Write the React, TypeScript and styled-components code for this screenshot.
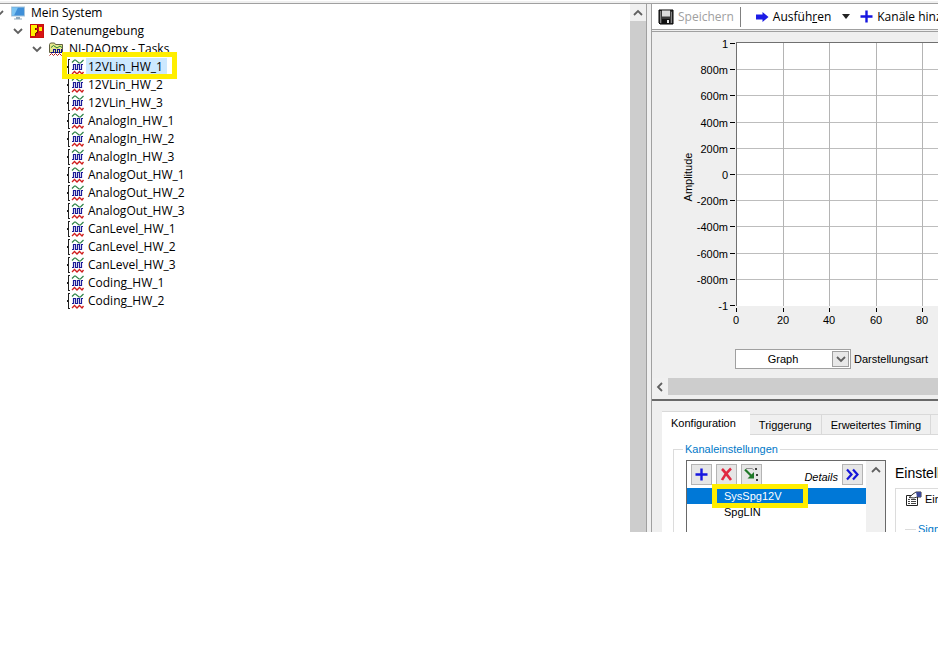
import React, { useState } from 'react';
import styled, { createGlobalStyle, css } from 'styled-components';

const GlobalStyle = createGlobalStyle`
  * { box-sizing: border-box; }
  body { margin: 0; background: #fff; color: #000; font: 11px/16px "Liberation Sans", Arial, sans-serif; }
  button, select { font: inherit; color: inherit; }
  svg { flex: none; }
`;

const treeFont = css`font: 12px/18px "Open Sans", "Noto Sans", sans-serif;`;

/* ---------- shell ---------- */
const Window = styled.div`
  overflow: hidden;
  background: #f0f0f0;
`;
const TopEdge = styled.div`
  height: 4px;
  background: #f0f0f0;
  border-top: 1px solid #fff;
  border-bottom: 1px solid #a0a0a0;
`;
const Split = styled.main`
  display: grid;
  grid-template-columns: minmax(0, 647fr) minmax(0, 291fr);
`;
const TreePane = styled.nav`
  display: flex;
  background: #fff;
  border-right: 1px solid #a0a0a0;
`;
const WorkPane = styled.section`
  margin-left: 4px;
  min-width: 0;
  border-left: 1px solid #a0a0a0;
  background: #efefef;
  overflow: hidden;
`;

/* ---------- tree ---------- */
const Tree = styled.ul`
  flex: 1;
  min-width: 0;
  margin: 0;
  padding: 0;
  list-style: none;
  overflow: hidden;
`;
const TreeRow = styled.li<{ $level: number }>`
  position: relative;
  display: flex;
  align-items: center;
  height: 18px;
  margin-left: -7px;
  padding-left: ${p => p.$level * 19}px;
`;
const Twisty = styled.button`
  display: flex;
  justify-content: center;
  width: 11px;
  margin-right: 6px;
  padding: 0;
  border: 0;
  background: none;
`;
const TwistySpace = styled.span`
  width: 17px;
`;
const TreeIcon = styled.span`
  display: flex;
  width: 19px;
`;
const TreeLabel = styled.button<{ $selected: boolean }>`
  ${treeFont}
  height: 18px;
  padding: 0 4px 0 2px;
  border: 0;
  white-space: nowrap;
  background: ${p => (p.$selected ? '#cce8ff' : 'none')};
`;
const Marker = styled.span<{ $wide?: boolean }>`
  position: absolute;
  z-index: 1;
  pointer-events: none;
  border: 5px solid #ffee00;
  ${p => (p.$wide
    ? 'left: 69px; top: -6px; width: 115px; height: 27px;'
    : 'left: 25px; top: -4px; width: 96px; height: 24px;')}
`;
const VScroll = styled.div<{ $thumb?: boolean }>`
  display: flex;
  flex-direction: column;
  align-items: center;
  width: ${p => (p.$thumb ? 16 : 19)}px;
  background: ${p => (p.$thumb ? '#cdcdcd' : '#f0f0f0')};
`;
const ScrollButton = styled.button`
  display: flex;
  align-items: center;
  justify-content: center;
  width: 16px;
  height: 17px;
  padding: 0;
  border: 0;
  background: #f0f0f0;
`;

/* ---------- toolbar ---------- */
const Toolbar = styled.div`
  display: flex;
  align-items: center;
  height: 26px;
  padding-left: 6px;
  background: #fff;
  border-bottom: 1px solid #a0a0a0;
`;
const ToolbarEdge = styled.div`
  height: 2px;
  border-bottom: 1px solid #a0a0a0;
`;
const ToolButton = styled.button`
  ${treeFont}
  display: flex;
  flex: none;
  align-items: center;
  gap: 4px;
  height: 22px;
  padding: 0;
  border: 0;
  background: none;
  white-space: nowrap;
  &:disabled { color: #a0a0a0; }
`;
const Divider = styled.span`
  flex: none;
  width: 1px;
  height: 20px;
  margin: 0 14px 0 6px;
  background: #808080;
`;
const MenuArrow = styled.button`
  display: flex;
  flex: none;
  margin: 0 10px 0 11px;
  padding: 0;
  border: 0;
  background: none;
`;

/* ---------- graph ---------- */
const Chart = styled.svg`
  display: block;
  width: 100%;
  height: 317px;
`;
const DisplayRow = styled.div`
  display: flex;
  align-items: center;
  gap: 3px;
  padding: 0 0 9px 83px;
`;
const SelectBox = styled.span`
  display: grid;
  flex: none;
  width: 116px;
  height: 20px;
  border: 1px solid #a0a0a0;
  background: #fff;
  > * { grid-area: 1 / 1; }
`;
const Select = styled.select`
  appearance: none;
  width: 100%;
  padding: 0 20px 0 0;
  border: 0;
  background: none;
  text-align: center;
  text-align-last: center;
`;
const SelectArrow = styled.span`
  display: flex;
  align-items: center;
  justify-content: center;
  justify-self: end;
  width: 17px;
  margin: 1px;
  border: 1px solid #a0a0a0;
  background: #e8e8e8;
  pointer-events: none;
`;
const FieldLabel = styled.label`
  white-space: nowrap;
`;
const HScroll = styled.div`
  display: flex;
  height: 17px;
  background: #cdcdcd;
`;
const Splitter = styled.div`
  height: 6px;
  border-bottom: 2px solid #696969;
`;

/* ---------- configuration ---------- */
const TabBar = styled.div`
  display: flex;
  align-items: flex-end;
  padding: 10px 0 0 10px;
`;
const Tab = styled.button<{ $active: boolean }>`
  flex: none;
  min-width: 60px;
  height: ${p => (p.$active ? 24 : 21)}px;
  padding: ${p => (p.$active ? '0 14px 2px 9px' : '0 9px')};
  border: 1px solid #d9d9d9;
  border-width: ${p => (p.$active ? '1px 0 0' : '1px 1px 1px 0')};
  background: ${p => (p.$active ? '#fff' : '#f0f0f0')};
  white-space: nowrap;
`;
const TabPage = styled.div`
  margin-left: 10px;
  padding: 6px 0 0 11px;
  background: #fff;
`;
const Group = styled.fieldset`
  min-width: 0;
  margin: 0;
  padding: 3px 0 0 12px;
  border: 1px solid #dcdcdc;
  border-width: 1px 0 0 1px;
`;
const Legend = styled.legend`
  margin-left: -3px;
  padding: 0 2px;
  color: #0078c8;
  white-space: nowrap;
`;
const GroupRow = styled.div`
  display: flex;
  height: 72px;
  overflow: hidden;
`;
const ChannelBox = styled.div`
  display: flex;
  flex: none;
  width: 200px;
  border: 1px solid #696969;
  border-bottom: 0;
`;
const ChannelMain = styled.div`
  flex: 1;
`;
const ChannelTools = styled.div`
  display: flex;
  align-items: center;
  gap: 4px;
  height: 27px;
  padding: 0 3px 0 4px;
`;
const SquareButton = styled.button`
  display: flex;
  align-items: center;
  justify-content: center;
  width: 21px;
  height: 21px;
  padding: 0;
  border: 1px solid #b4b4b4;
  background: #e6e6e6;
`;
const DetailsText = styled.span`
  margin-left: auto;
  padding-top: 4px;
  font-style: italic;
`;
const ChannelList = styled.ul`
  margin: 0;
  padding: 0;
  list-style: none;
`;
const Channel = styled.li`
  position: relative;
`;
const ChannelButton = styled.button<{ $selected: boolean }>`
  display: block;
  width: 100%;
  height: 16px;
  padding: 0 0 0 37px;
  border: 0;
  text-align: left;
  background: ${p => (p.$selected ? '#0078d7' : 'none')};
  color: ${p => (p.$selected ? '#fff' : '#000')};
`;
const Settings = styled.div`
  flex: 1;
  min-width: 0;
  padding: 4px 0 0 9px;
`;
const SettingsTitle = styled.h2`
  margin: 0 0 6px;
  font-size: 14px;
  line-height: 18px;
  font-weight: 400;
  white-space: nowrap;
`;
const SettingsCard = styled.div`
  padding: 2px 0 0 9px;
  border: 1px solid #dcdcdc;
  border-width: 1px 0 0 1px;
`;
const CardTitle = styled.div`
  display: flex;
  align-items: center;
  gap: 3px;
  height: 16px;
  white-space: nowrap;
`;
const SignalGroup = styled.fieldset`
  margin: 14px 0 0;
  padding: 0 0 8px 14px;
  border: 0 solid #dcdcdc;
  border-width: 1px 0 0;
  color: #0078c8;
`;

/* ---------- icons ---------- */
type Dir = 'up' | 'down' | 'left';
const Chevron = ({ dir }: { dir: Dir }) => {
  const d = { up: 'M1 7 5 3 9 7', down: 'M1 3 5 7 9 3', left: 'M7 1 3 5 7 9' }[dir];
  return (
    <svg width="10" height="10" viewBox="0 0 10 10" fill="none" stroke="#606060" strokeWidth="1.8">
      <path d={d} />
    </svg>
  );
};
const SystemIcon = () => (
  <svg width="16" height="16" viewBox="0 0 16 16">
    <rect x="1" y="1.5" width="14" height="10" fill="#a9c6dc" />
    <rect x="2" y="2.5" width="12" height="8" fill="#3f8fd8" />
    <path d="M2 2.5h6L4 10.5H2z" fill="#7cc4f2" />
    <path d="M6 12h4v1.500h2v1H4v-1h2z" fill="#8fa9bb" />
  </svg>
);
const DataIcon = () => (
  <svg width="16" height="16" viewBox="0 0 16 16" shapeRendering="crispEdges">
    <rect x="1" y="1" width="14" height="14" fill="#c81010" />
    <path d="M2 2h6v3H6v2h2v3H6v3H2z" fill="#fff000" />
    <path d="M10 4h3v4h-3z" fill="#fff000" />
    <path d="M8 2h1v3H7v2h2v3H7v3H6v-3h1V9h1V7H6V5h2z" fill="#7a1000" />
    <path d="M9 8h5v6H7v-3h2z" fill="#d81414" />
    <path d="M9 2h5v2h-4v3H9z" fill="#d81414" />
  </svg>
);
const FolderIcon = () => (
  <svg width="17" height="16" viewBox="0 0 17 16" fill="none">
    <path d="M1.500 11.500v-8l1-1.500h4l1 1.500h7v8z" fill="#e6e68c" stroke="#606040" />
    <path d="M3 6.500 5.500 4.500 9 7l3-2 2 1.500" stroke="#218030" />
    <path d="M3 11.500h2v-3h2v3h2v-3h2v3h2v-3h1" stroke="#101090" shapeRendering="crispEdges" />
    <path d="M1.500 14.500 3.500 12.500l2 2 2-2 2 2 2-2 2 2 2-2" stroke="#b01818" />
  </svg>
);
const TaskIcon = () => (
  <svg width="18" height="16" viewBox="0 0 18 16" fill="none">
    <path d="M3 .5H1.500V7.500H.500v1h1v7H3" stroke="#202020" shapeRendering="crispEdges" />
    <path d="M5 3.500 7.500 1h1L12 4h1.500L16.500 1" stroke="#2c8244" strokeWidth="1.200" />
    <path d="M5 10.500h1.500v-5h2v5h2v-5h2v5h2v-5h1.500" stroke="#1c1c98" strokeWidth="1.200" />
    <path d="M5 15 7.500 12.500l2.500 2.500 2.500-2.500 2.500 2.500 1.500-2" stroke="#d01c1c" strokeWidth="1.300" />
  </svg>
);
const SaveIcon = () => (
  <svg width="16" height="16" viewBox="0 0 16 16">
    <path d="M1 1h14v14H2L1 14z" fill="#3a3a3a" stroke="#000" />
    <rect x="4" y="1.500" width="8" height="6" fill="#dcdcdc" />
    <rect x="4" y="10" width="8" height="5" fill="#111" />
    <rect x="9" y="11" width="2" height="3" fill="#e8e8e8" />
    <path d="M2.500 2v12M13.500 3v11" stroke="#858585" />
  </svg>
);
const RunIcon = () => (
  <svg width="14" height="14" viewBox="0 0 14 14">
    <path d="M1 4.500h6.500V2l6 5-6 5V9.500H1z" fill="#1c1ce6" />
  </svg>
);
const PlusIcon = () => (
  <svg width="13" height="13" viewBox="0 0 13 13">
    <path d="M6.500.5v12M.5 6.500h12" stroke="#1616e0" strokeWidth="2.400" />
  </svg>
);
const CrossIcon = () => (
  <svg width="15" height="15" viewBox="0 0 15 15">
    <path d="M3 2c3 3 6 7 9 11M12 1.500C8 5 5 9 3 13" stroke="#e02840" strokeWidth="2.600" fill="none" />
  </svg>
);
const CopyDownIcon = () => (
  <svg width="17" height="17" viewBox="0 0 17 17">
    <path d="M2 3.500 9 10.500" stroke="#207828" strokeWidth="2.200" />
    <path d="M11 6v6.500H4.500z" fill="#207828" />
    <path d="M3 2.500h6l2 1.500" stroke="#909090" fill="none" />
    <path d="M12 2h2v2h-2zM13 8h2v2h-2zM13 13h2v2h-2z" fill="#404040" />
  </svg>
);
const DoubleChevron = () => (
  <svg width="15" height="13" viewBox="0 0 15 13" fill="none" stroke="#1616d8" strokeWidth="2.200">
    <path d="M2 1.500l4.500 5L2 11.500M8 1.500l4.500 5-4.500 5" />
  </svg>
);
const PropertiesIcon = () => (
  <svg width="17" height="16" viewBox="0 0 17 16">
    <path d="M1.500 4.500h11v10h-11z" fill="#fff" stroke="#222" />
    <path d="M3 8.500h2M6 8.500h5M3 10.500h2M6 10.500h5M3 12.500h2M6 12.500h5" stroke="#444" />
    <path d="M4 6.500 8 3l3-2h5v5h-4l-3 1z" fill="#fff" stroke="#333" />
    <path d="M11 1h5v5h-4z" fill="#3c4898" />
  </svg>
);

/* ---------- graph drawing ---------- */
const yTicks: [string, number][] = [
  ['1', 11], ['800m', 37], ['600m', 63], ['400m', 90], ['200m', 116], ['0', 142],
  ['-200m', 168], ['-400m', 194], ['-600m', 221], ['-800m', 247], ['-1', 273],
];
const xTicks: [string, number][] = [['0', 84], ['20', 131], ['40', 177], ['60', 224], ['80', 270]];

const Graph = () => (
  <Chart role="img" aria-label="Amplitude" shapeRendering="crispEdges">
    <rect x="84" y="10" width="100%" height="264" fill="#fff" />
    {yTicks.slice(1, -1).map(([t, y]) => <rect key={t} x="84" y={y} width="100%" height="1" fill="#bdbdbd" />)}
    {xTicks.slice(1).map(([t, x]) => <rect key={t} x={x} y="10" width="1" height="264" fill="#b4b4b4" />)}
    <rect x="84" y="10" width="100%" height="1" fill="#707070" />
    <rect x="84" y="10" width="1" height="264" fill="#707070" />
    {yTicks.map(([t, y]) => (
      <g key={t}>
        <rect x="78" y={y} width="5" height="1" fill="#000" />
        <text x="76" y={y + 5} textAnchor="end">{t}</text>
      </g>
    ))}
    {xTicks.map(([t, x]) => (
      <g key={t}>
        <rect x={x} y="276" width="1" height="4" fill="#000" />
        <text x={x} y="292" textAnchor="middle">{t}</text>
      </g>
    ))}
    <text transform="translate(40 145) rotate(-90)" textAnchor="middle">Amplitude</text>
  </Chart>
);

/* ---------- data ---------- */
const parents = [
  { label: 'Mein System', icon: <SystemIcon /> },
  { label: 'Datenumgebung', icon: <DataIcon /> },
  { label: 'NI-DAQmx - Tasks', icon: <FolderIcon /> },
];
const tasks = [
  '12VLin_HW_1', '12VLin_HW_2', '12VLin_HW_3', 'AnalogIn_HW_1', 'AnalogIn_HW_2', 'AnalogIn_HW_3',
  'AnalogOut_HW_1', 'AnalogOut_HW_2', 'AnalogOut_HW_3', 'CanLevel_HW_1', 'CanLevel_HW_2', 'CanLevel_HW_3',
  'Coding_HW_1', 'Coding_HW_2',
];
const tabs = ['Konfiguration', 'Triggerung', 'Erweitertes Timing'];
const channels = ['SysSpg12V', 'SpgLIN'];

export default function App() {
  const [task, setTask] = useState(tasks[0]);
  const [tab, setTab] = useState(tabs[0]);
  const [channel, setChannel] = useState(channels[0]);

  return (
    <>
      <GlobalStyle />
      <Window>
        <TopEdge />
        <Split>
          <TreePane aria-label="Konfiguration">
            <Tree>
              {parents.map((p, i) => (
                <TreeRow key={p.label} $level={i}>
                  <Twisty aria-label={`${p.label} einklappen`}><Chevron dir="down" /></Twisty>
                  <TreeIcon>{p.icon}</TreeIcon>
                  <TreeLabel $selected={false}>{p.label}</TreeLabel>
                </TreeRow>
              ))}
              {tasks.map((t, i) => (
                <TreeRow key={t} $level={3}>
                  <TwistySpace />
                  <TreeIcon><TaskIcon /></TreeIcon>
                  <TreeLabel $selected={t === task} onClick={() => setTask(t)}>{t}</TreeLabel>
                  {i === 0 && <Marker $wide />}
                </TreeRow>
              ))}
            </Tree>
            <VScroll $thumb>
              <ScrollButton aria-label="Nach oben"><Chevron dir="up" /></ScrollButton>
            </VScroll>
          </TreePane>

          <WorkPane>
            <Toolbar>
              <ToolButton disabled><SaveIcon />Speichern</ToolButton>
              <Divider />
              <ToolButton><RunIcon /><span>Ausfüh<u>r</u>en</span></ToolButton>
              <MenuArrow aria-label="Ausführungsoptionen">
                <svg width="8" height="5" viewBox="0 0 8 5"><path d="M0 0h8L4 5z" fill="#222" /></svg>
              </MenuArrow>
              <ToolButton><PlusIcon />Kanäle hinzufügen</ToolButton>
            </Toolbar>
            <ToolbarEdge />
            <Graph />
            <DisplayRow>
              <SelectBox>
                <Select id="display-mode" defaultValue="Graph">
                  <option>Graph</option>
                  <option>Tabelle</option>
                </Select>
                <SelectArrow><Chevron dir="down" /></SelectArrow>
              </SelectBox>
              <FieldLabel htmlFor="display-mode">Darstellungsart</FieldLabel>
            </DisplayRow>
            <HScroll>
              <ScrollButton aria-label="Nach links"><Chevron dir="left" /></ScrollButton>
            </HScroll>
            <Splitter />
            <TabBar role="tablist">
              {tabs.map(t => (
                <Tab key={t} role="tab" aria-selected={t === tab} $active={t === tab} onClick={() => setTab(t)}>{t}</Tab>
              ))}
              <Tab role="tab" aria-label="Weitere" aria-selected={false} $active={false} />
            </TabBar>
            <TabPage role="tabpanel">
              <Group>
                <Legend>Kanaleinstellungen</Legend>
                <GroupRow>
                  <ChannelBox>
                    <ChannelMain>
                      <ChannelTools>
                        <SquareButton aria-label="Kanal hinzufügen"><PlusIcon /></SquareButton>
                        <SquareButton aria-label="Kanal löschen"><CrossIcon /></SquareButton>
                        <SquareButton aria-label="Reihenfolge ändern"><CopyDownIcon /></SquareButton>
                        <DetailsText id="details-label">Details</DetailsText>
                        <SquareButton aria-labelledby="details-label"><DoubleChevron /></SquareButton>
                      </ChannelTools>
                      <ChannelList>
                        {channels.map((c, i) => (
                          <Channel key={c}>
                            <ChannelButton $selected={c === channel} onClick={() => setChannel(c)}>{c}</ChannelButton>
                            {i === 0 && <Marker />}
                          </Channel>
                        ))}
                      </ChannelList>
                    </ChannelMain>
                    <VScroll>
                      <ScrollButton aria-label="Kanäle nach oben"><Chevron dir="up" /></ScrollButton>
                    </VScroll>
                  </ChannelBox>
                  <Settings>
                    <SettingsTitle>Einstellungen</SettingsTitle>
                    <SettingsCard>
                      <CardTitle><PropertiesIcon />Einstellungen</CardTitle>
                      <SignalGroup><Legend>Signaleingangsbereich</Legend></SignalGroup>
                    </SettingsCard>
                  </Settings>
                </GroupRow>
              </Group>
            </TabPage>
          </WorkPane>
        </Split>
      </Window>
    </>
  );
}
